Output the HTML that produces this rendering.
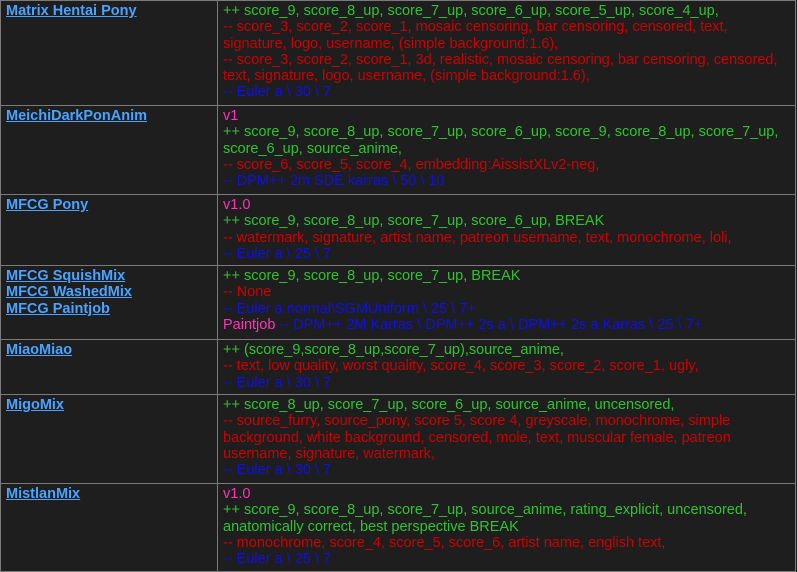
<!DOCTYPE html>
<html><head><meta charset="utf-8"><style>
html,body{margin:0;padding:0;background:#1e1e1e;width:797px;height:571px;overflow:hidden}
table{position:absolute;left:0;top:0;border-collapse:collapse;font-family:"Liberation Sans",Arial,sans-serif;font-size:14.5px;line-height:16.3px;width:796px;table-layout:fixed}
td{border:1px solid #7a7a7a;vertical-align:top;padding:2px 5px 3px 5px;background:#1e1e1e}
td.l{width:206px}
a{color:#49a3ff;font-weight:bold;text-decoration:underline}
.g{color:#2fc42f}.r{color:#cc0000}.b{color:#0f0fe8}.p{color:#ff33bb}
</style></head><body>
<table>
<tr style="height:105px"><td class="l"><a>Matrix Hentai Pony</a></td><td>
<div class="g">++ score_9, score_8_up, score_7_up, score_6_up, score_5_up, score_4_up,</div>
<div class="r">-- score_3, score_2, score_1, mosaic censoring, bar censoring, censored, text, signature, logo, username, (simple background:1.6),</div>
<div class="r">-- score_3, score_2, score_1, 3d, realistic, mosaic censoring, bar censoring, censored, text, signature, logo, username, (simple background:1.6),</div>
<div class="b">-- Euler a \ 30 \ 7</div></td></tr>
<tr style="height:89px"><td class="l"><a>MeichiDarkPonAnim</a></td><td>
<div class="p">v1</div>
<div class="g">++ score_9, score_8_up, score_7_up, score_6_up, score_9, score_8_up, score_7_up, score_6_up, source_anime,</div>
<div class="r">-- score_6, score_5, score_4, embedding:AissistXLv2-neg,</div>
<div class="b">-- DPM++ 2m SDE karras \ 50 \ 10</div></td></tr>
<tr style="height:70px"><td class="l"><a>MFCG Pony</a></td><td>
<div class="p">v1.0</div>
<div class="g">++ score_9, score_8_up, score_7_up, score_6_up, BREAK</div>
<div class="r">-- watermark, signature, artist name, patreon username, text, monochrome, loli,</div>
<div class="b">-- Euler a \ 25 \ 7</div></td></tr>
<tr style="height:74px"><td class="l"><a>MFCG SquishMix</a><br><a>MFCG WashedMix</a><br><a>MFCG Paintjob</a></td><td>
<div class="g">++ score_9, score_8_up, score_7_up, BREAK</div>
<div class="r">-- None</div>
<div class="b">-- Euler a normal\SGMUniform \ 25 \ 7+</div>
<div class="b"><span class="p">Paintjob</span> -- DPM++ 2M Karras \ DPM++ 2s a \ DPM++ 2s a Karras \ 25 \ 7+</div></td></tr>
<tr style="height:55px"><td class="l"><a>MiaoMiao</a></td><td>
<div class="g">++ (score_9,score_8_up,score_7_up),source_anime,</div>
<div class="r">-- text, low quality, worst quality, score_4, score_3, score_2, score_1, ugly,</div>
<div class="b">-- Euler a \ 30 \ 7</div></td></tr>
<tr style="height:89px"><td class="l"><a>MigoMix</a></td><td>
<div class="g">++ score_8_up, score_7_up, score_6_up, source_anime, uncensored,</div>
<div class="r">-- source_furry, source_pony, score 5, score 4, greyscale, monochrome, simple background, white background, censored, mole, text, muscular female, patreon username, signature, watermark,</div>
<div class="b">-- Euler a \ 30 \ 7</div></td></tr>
<tr style="height:88px"><td class="l"><a>MistlanMix</a></td><td>
<div class="p">v1.0</div>
<div class="g">++ score_9, score_8_up, score_7_up, source_anime, rating_explicit, uncensored, anatomically correct, best perspective BREAK</div>
<div class="r">-- monochrome, score_4, score_5, score_6, artist name, english text,</div>
<div class="b">-- Euler a \ 25 \ 7</div></td></tr>
</table>
</body></html>
